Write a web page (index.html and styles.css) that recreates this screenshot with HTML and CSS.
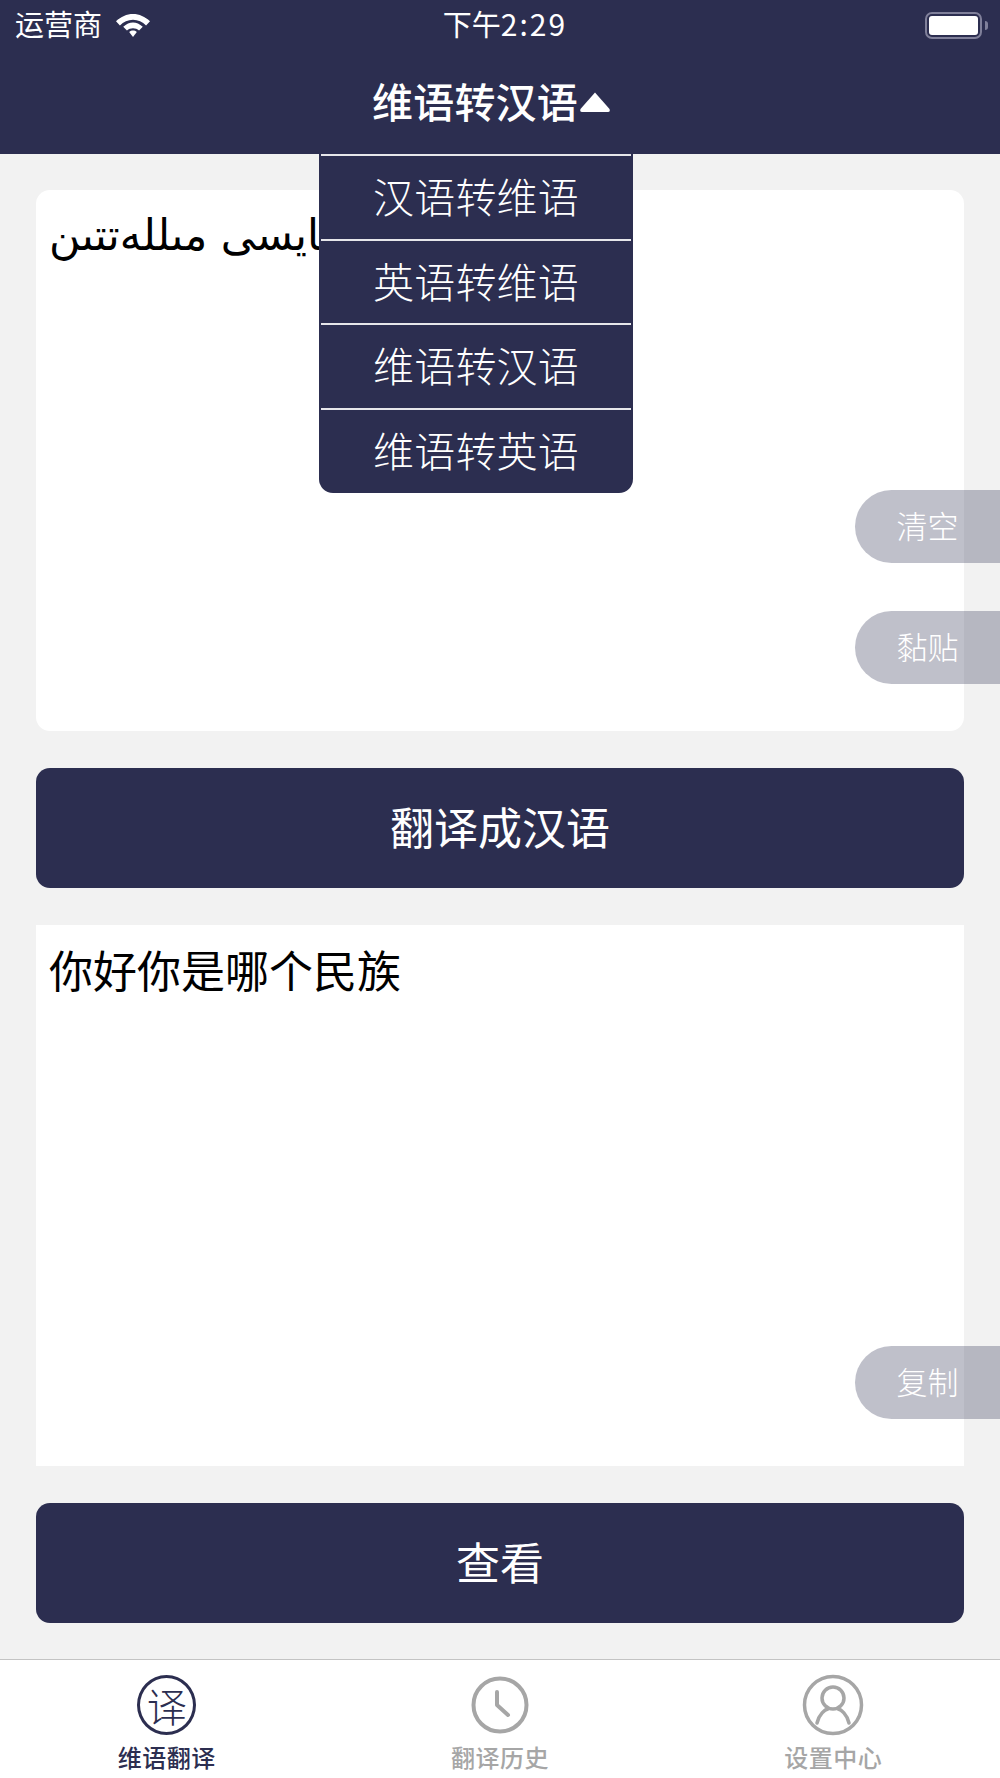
FILE: index.html
```html
<!DOCTYPE html>
<html lang="zh">
<head>
<meta charset="utf-8">
<title>维语翻译</title>
<link rel="stylesheet" href="styles.css">
</head>
<body>
<div class="app">
  <header class="header">
    <div class="status">
      <div class="status-left">
        <span class="carrier">运营商</span>
        <svg class="wifi" viewBox="1 3.500 32 20" preserveAspectRatio="none"><path d="M17 3.500C11 3.500 5.800 5.800 1 9.800L4.700 13.400C8 10.400 12.300 8.600 17 8.600S26 10.400 29.300 13.400L33 9.800C28.200 5.800 23 3.500 17 3.500Z"/><path d="M17 10.800C13.800 10.800 10.800 12 7.800 14.500L11.300 17.800C12.900 16.500 14.900 15.800 17 15.800S21.100 16.500 22.700 17.800L26.200 14.500C23.200 12 20.200 10.800 17 10.800Z"/><path d="M17 17.800C15.700 17.800 14.600 18.200 13.400 19.100L17 23.500L20.600 19.100C19.400 18.200 18.300 17.800 17 17.800Z"/></svg>
      </div>
      <span class="time">下午<span class="digits">2:29</span></span>
      <div class="battery"><div class="battery-body"><div class="battery-fill"></div></div><div class="battery-cap"></div></div>
    </div>
    <div class="title-row">
      <span class="title">维语转汉语</span>
      <svg class="caret" viewBox="0 0 32 22"><path d="M16 1.500L30.500 18Q31.500 21 29 21H3Q.5 21 1.500 18Z"/></svg>
    </div>
  </header>

  <main class="main">
    <section class="card card-round">
      <p class="source" dir="rtl">سالام سىز قايسى مىللەتتىن</p>
      <div class="side-actions side-source">
        <button class="side-btn">清空</button>
        <button class="side-btn">黏贴</button>
      </div>
    </section>
    <button class="primary">翻译成汉语</button>
    <section class="card">
      <p class="result">你好你是哪个民族</p>
      <div class="side-actions side-result">
        <button class="side-btn">复制</button>
      </div>
    </section>
    <button class="primary">查看</button>
  </main>

  <nav class="tabs">
    <div class="tab tab-active">
      <div class="tab-badge"><span class="glyph">译</span></div>
      <span class="tab-label">维语翻译</span>
    </div>
    <div class="tab">
      <svg class="tab-icon" viewBox="0 0 60 60" fill="none" stroke="currentColor" stroke-linecap="round" stroke-linejoin="round"><circle cx="30" cy="30" r="26.500" stroke-width="4"/><path d="M27 17V30L38 40" stroke-width="4"/></svg>
      <span class="tab-label">翻译历史</span>
    </div>
    <div class="tab">
      <svg class="tab-icon tab-icon-big" viewBox="0 0 62 62" fill="none" stroke="currentColor" stroke-linecap="round"><circle cx="31" cy="31" r="28.500" stroke-width="3.500"/><circle cx="31" cy="24" r="11" stroke-width="3.500"/><path d="M15 49C17 40 23 35.500 26 35M47 49C45 40 39 35.500 36 35" stroke-width="3.500"/></svg>
      <span class="tab-label">设置中心</span>
    </div>
  </nav>

  <div class="dropdown">
    <div class="drop-item">汉语转维语</div>
    <div class="drop-item">英语转维语</div>
    <div class="drop-item">维语转汉语</div>
    <div class="drop-item">维语转英语</div>
  </div>
</div>
</body>
</html>
```
FILE: styles.css
```css
* { box-sizing: border-box; }
html, body { margin: 0; padding: 0; }
body {
  font-family: "Noto Sans CJK SC", "Liberation Sans", sans-serif;
  background: #f2f2f2;
}
.app {
  position: relative;
  width: 1000px;
  height: 1778px;
  display: flex;
  flex-direction: column;
  overflow: hidden;
}
.header {
  height: 154px;
  background: #2c2e50;
  color: #fff;
  flex: none;
}
.status {
  height: 50px;
  padding: 0 12px 0 15px;
  display: grid;
  grid-template-columns: 1fr auto 1fr;
  align-items: center;
}
.status-left { display: flex; align-items: center; gap: 14px; }
.carrier { font-size: 29px; line-height: 46px; padding-bottom: 4px; }
.wifi { width: 34px; height: 23px; fill: #fff; }
.time { font-size: 29px; line-height: 46px; padding-bottom: 4px; margin-left: 7px; }
.digits { font-size: 30px; letter-spacing: 2px; }
.battery { justify-self: end; display: flex; align-items: center; gap: 3px; }
.battery-body {
  width: 57px;
  height: 27px;
  border: 2px solid #80809a;
  border-radius: 7px;
  padding: 2px;
}
.battery-fill { width: 100%; height: 100%; background: #fff; border-radius: 3px; }
.battery-cap { width: 3px; height: 9px; background: #80809a; border-radius: 0 3px 3px 0; }
.title-row {
  height: 104px;
  padding-left: 372px;
  padding-bottom: 4px;
  display: flex;
  align-items: center;
}
.title { font-size: 41px; font-weight: 500; line-height: 60px; letter-spacing: 0.200px; }
.caret { width: 32px; height: 22px; fill: #fff; margin-top: 4px; margin-left: 1px; }
.main {
  flex: 1;
  padding: 36px 36px 0;
  display: flex;
  flex-direction: column;
  gap: 37px;
}
.card {
  position: relative;
  height: 541px;
  background: #fff;
  flex: none;
}
.card-round { border-radius: 14px; }
.source, .result {
  margin: 0;
  padding: 0 13px;
  color: #000;
  line-height: 46px;
}
.source {
  padding-top: 22px;
  font-family: "DejaVu Sans", sans-serif;
  font-size: 43px;
  text-align: left;
}
.result { padding-top: 21px; font-size: 44px; }
.side-actions {
  position: absolute;
  right: -36px;
  display: flex;
  flex-direction: column;
  gap: 48px;
}
.side-source { top: 300px; }
.side-result { top: 421px; }
.side-btn {
  width: 145px;
  height: 73px;
  padding: 0 0 4px;
  border: 0;
  border-radius: 36.500px 0 0 36.500px;
  background: rgba(44, 46, 80, 0.3);
  color: #fff;
  font-family: inherit;
  font-size: 31px;
  font-weight: 300;
  text-align: center;
}
.primary {
  height: 120px;
  flex: none;
  padding: 0 0 4px;
  border: 0;
  border-radius: 14px;
  background: #2c2e50;
  color: #fff;
  font-family: inherit;
  font-size: 44px;
  font-weight: 400;
}
.tabs {
  height: 119px;
  flex: none;
  background: #fff;
  border-top: 1px solid #c4c4c4;
  display: grid;
  grid-template-columns: repeat(3, 1fr);
}
.tab {
  display: flex;
  flex-direction: column;
  align-items: center;
  color: #a6a6a6;
  padding-top: 15px;
}
.tab-active { color: #2c2e50; }
.tab-icon { width: 60px; height: 60px; flex: none; }
.tab-icon-big { width: 62px; height: 62px; margin-top: -1px; margin-bottom: -1px; }
.tab-badge {
  width: 59px;
  height: 60px;
  flex: none;
  border: 3px solid currentColor;
  border-radius: 50%;
  display: flex;
  align-items: center;
  justify-content: center;
}
.glyph { font-size: 40px; line-height: 44px; font-weight: 300; }
.tab-label { font-size: 24px; font-weight: 500; line-height: 30px; margin-top: 7px; letter-spacing: 0.500px; }
.dropdown {
  position: absolute;
  left: 319px;
  top: 154px;
  width: 314px;
  height: 339px;
  padding: 0 2px;
  background: #2c2e50;
  border-radius: 0 0 14px 14px;
  color: #fff;
}
.drop-item {
  height: 84.500px;
  border-top: 2px solid #e6e6ea;
  font-size: 41px;
  line-height: 78px;
  text-align: center;
  font-weight: 300;
  letter-spacing: 0.200px;
}
```
